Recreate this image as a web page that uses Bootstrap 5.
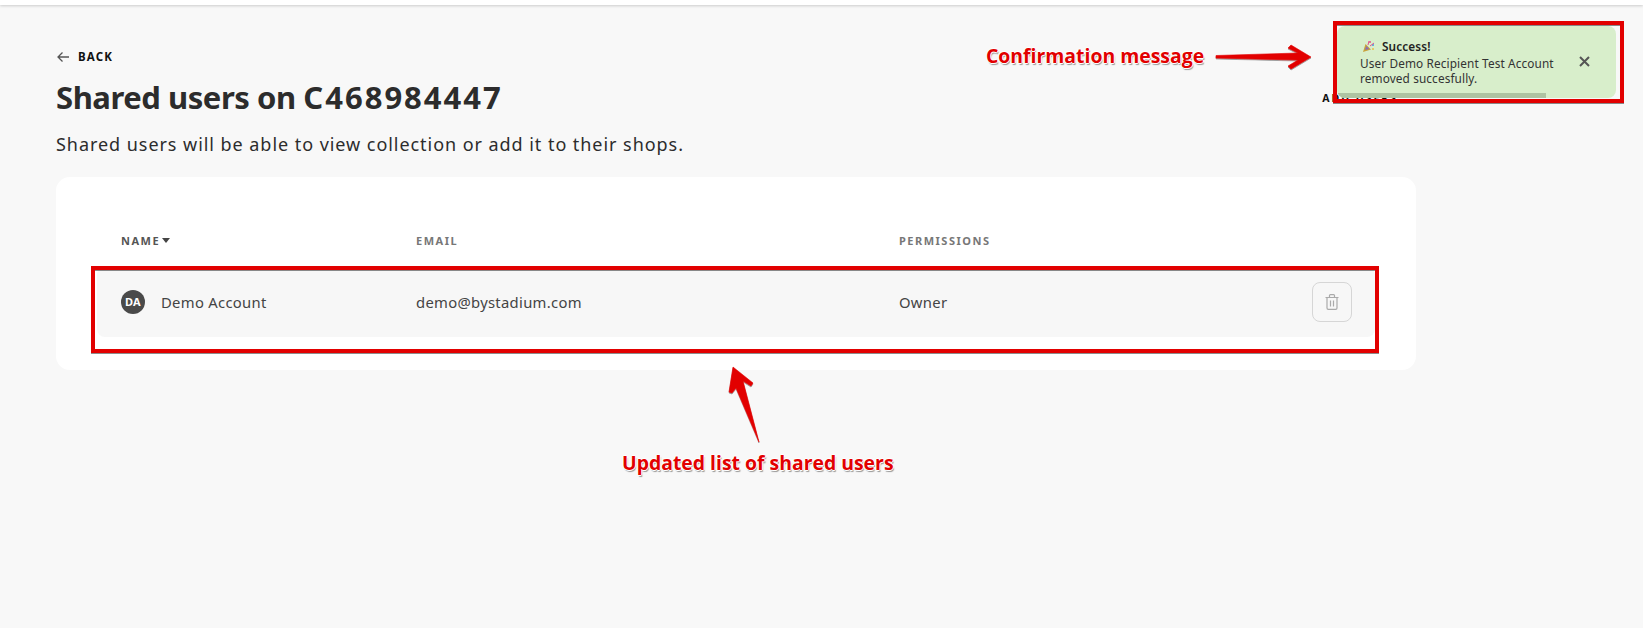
<!DOCTYPE html>
<html lang="en">
<head>
  <meta charset="UTF-8">
  <meta name="viewport" content="width=device-width, initial-scale=1.0">
  <title>Shared users</title>
  <link href="https://cdn.jsdelivr.net/npm/bootstrap@5.3.2/dist/css/bootstrap.min.css" rel="stylesheet">
  <style>
    html, body { height: 100%; }
    body { background: #f8f8f8; color: #2c2c2c; font-family: "Noto Sans", "Liberation Sans", sans-serif; overflow: hidden; position: relative; }
    .top-strip { height: 5px; background: #fff; box-shadow: 0 1px 3px rgba(0,0,0,.18); }
    .page-wrap { width: 1416px; padding: 43px 0 0 56px; }
    .back-link { color: #111; font-size: 11.5px; font-weight: 700; letter-spacing: 1.2px; line-height: 18px; text-decoration: none; }
    .page-title { font-size: 31px; font-weight: 700; line-height: 40px; letter-spacing: -.45px; margin: 11px 0 0; color: #2c2c2c; }
    .title-code { letter-spacing: 2px; }
    .page-sub { font-size: 18px; line-height: 26px; letter-spacing: .95px; margin: 14px 0 0; color: #2c2c2c; }
    .add-users { font-size: 10.5px; font-weight: 700; letter-spacing: 2px; color: #111; margin: 0 18px 0 0; padding-top: 43px; line-height: 14px; }
    .users-card { background: #fff; border-radius: 14px; margin-top: 20px; padding: 56px 41px 0; height: 193px; }
    .users-head { color: #777; font-size: 11px; font-weight: 700; letter-spacing: 1.5px; line-height: 16px; padding-left: 24px; }
    .users-head .head-name { color: #555; }
    .sort-caret { display: inline-block; border: 4px solid transparent; border-top: 5px solid #444; border-bottom: 0; margin-left: 2px; vertical-align: 2px; }
    .user-row { background: #f7f7f7; border-radius: 8px; height: 70px; margin-top: 18px; padding: 0 23px 0 24px; color: #444; font-size: 14.8px; letter-spacing: .3px; }
    .col-name { width: 295px; flex: none; }
    .col-mail { width: 483px; flex: none; }
    .user-dot { width: 24px; height: 24px; border-radius: 50%; background: #4a4a4a; color: #fff; font-size: 11px; font-weight: 700; letter-spacing: .2px; }
    .trash-btn { width: 40px; height: 40px; border: 1px solid #d6d6d6; border-radius: 8px; background: transparent; padding: 0; }
    .toast-note { position: absolute; left: 1337px; top: 26px; width: 279px; height: 72px; background: #d8eecb; border-radius: 8px; font-size: 11.8px; line-height: 15px; color: #333; padding: 13px 0 0 23px; overflow: hidden; letter-spacing: .12px; }
    .toast-head { font-weight: 600; color: #222; margin-left: 22px; margin-bottom: 2px; position: relative; }
    .toast-party { position: absolute; left: -20px; top: 1px; }
    .toast-x { position: absolute; left: 242px; top: 30px; }
    .toast-bar { position: absolute; left: 0; bottom: 0; width: 209px; height: 5px; background: #aec3a2; }
    .overlay-marks { position: absolute; left: 0; top: 0; pointer-events: none; }
    .callout { position: absolute; color: #e20000; font-family: "Open Sans", "Noto Sans", sans-serif; font-weight: 700; font-size: 19.4px; line-height: 24px; white-space: nowrap; text-shadow: 1px 0 0 #fff, -1px 0 0 #fff, 0 -1px 0 #fff, 0 1px 0 #fff, 1px 2px 1px #999; }
    .callout-top { left: 986px; top: 44px; }
    .callout-bottom { left: 622px; top: 451px; }
  </style>
</head>
<body>
  <div class="top-strip"></div>
  <div class="page-wrap">
    <div class="d-flex justify-content-between align-items-start">
      <div>
        <a href="#" class="back-link d-flex align-items-center gap-2">
          <svg width="14" height="12" viewBox="0 0 14 12" fill="none" stroke="#555" stroke-width="1.3"><path d="M13 6H2M6.500 1.500 2 6l4.500 4.500"/></svg>
          BACK
        </a>
        <h1 class="page-title">Shared users on <span class="title-code">C468984447</span></h1>
      </div>
      <div class="add-users">ADD USERS</div>
    </div>
    <p class="page-sub">Shared users will be able to view collection or add it to their shops.</p>
    <div class="users-card">
      <div class="users-head d-flex">
        <div class="col-name head-name">NAME<span class="sort-caret"></span></div>
        <div class="col-mail">EMAIL</div>
        <div>PERMISSIONS</div>
      </div>
      <div class="user-row d-flex align-items-center">
        <div class="col-name d-flex align-items-center gap-3">
          <span class="user-dot d-flex align-items-center justify-content-center">DA</span>
          <span>Demo Account</span>
        </div>
        <div class="col-mail">demo@bystadium.com</div>
        <div>Owner</div>
        <button class="trash-btn ms-auto d-flex align-items-center justify-content-center" type="button" aria-label="Remove">
          <svg width="14" height="16" viewBox="0 0 14 16" fill="none" stroke="#aaa" stroke-width="1.2"><path d="M.5 3.500h13M4.500 3.500V1.600c0-.5.4-.9.9-.9h3.200c.5 0 .9.4.9.9v1.900M2 3.500V14c0 .7.6 1.300 1.300 1.300h7.400c.7 0 1.300-.6 1.300-1.300V3.500M5.500 6.500v6M8.500 6.500v6"/></svg>
        </button>
      </div>
    </div>
  </div>

  <div class="toast-note">
    <div class="toast-head">
      <svg class="toast-party" width="13" height="13" viewBox="0 0 13 13"><path d="M1 12 3.500 4l5.500 5.500z" fill="#c9a13b"/><path d="M3 10 4.300 6l3 3z" fill="#8a6fb0"/><circle cx="8" cy="2" r="1" fill="#e2508a"/><circle cx="11" cy="5" r="1" fill="#3d9be0"/><path d="M6 5 7 1M8 6l4-3" stroke="#e2508a" stroke-width="1"/><circle cx="11" cy="9" r=".9" fill="#e8b83a"/></svg>
      Success!
    </div>
    <div>User Demo Recipient Test Account<br>removed succesfully.</div>
    <svg class="toast-x" width="11" height="11" viewBox="0 0 11 11" stroke="#555" stroke-width="2"><path d="M1 1l9 9M10 1l-9 9"/></svg>
    <div class="toast-bar"></div>
  </div>

  <svg class="overlay-marks" width="1643" height="628" viewBox="0 0 1643 628">
    <defs>
      <filter id="markShadow" x="-5%" y="-5%" width="110%" height="110%"><feDropShadow dx="0" dy="1" stdDeviation=".5" flood-color="#000" flood-opacity=".45"/></filter>
    </defs>
    <g fill="none" stroke="#e20000" stroke-width="4" filter="url(#markShadow)">
      <rect x="1335" y="23" width="287" height="78"/>
      <rect x="93" y="268" width="1284" height="83"/>
    </g>
    <g fill="#e20000" stroke="#e20000" stroke-width=".6" stroke-linejoin="round" filter="url(#markShadow)">
      <path d="M1216 55.500 1298 53 1288 48 1291 45 1311 57 1291 69 1288 66 1298 60 1216 58z"/>
      <path d="M759 442 743 381 751 386 753 383 733 367 729 392 732 393 736 388z"/>
    </g>
  </svg>
  <div class="callout callout-top">Confirmation message</div>
  <div class="callout callout-bottom">Updated list of shared users</div>

  <script src="https://cdn.jsdelivr.net/npm/bootstrap@5.3.2/dist/js/bootstrap.bundle.min.js"></script>
</body>
</html>
